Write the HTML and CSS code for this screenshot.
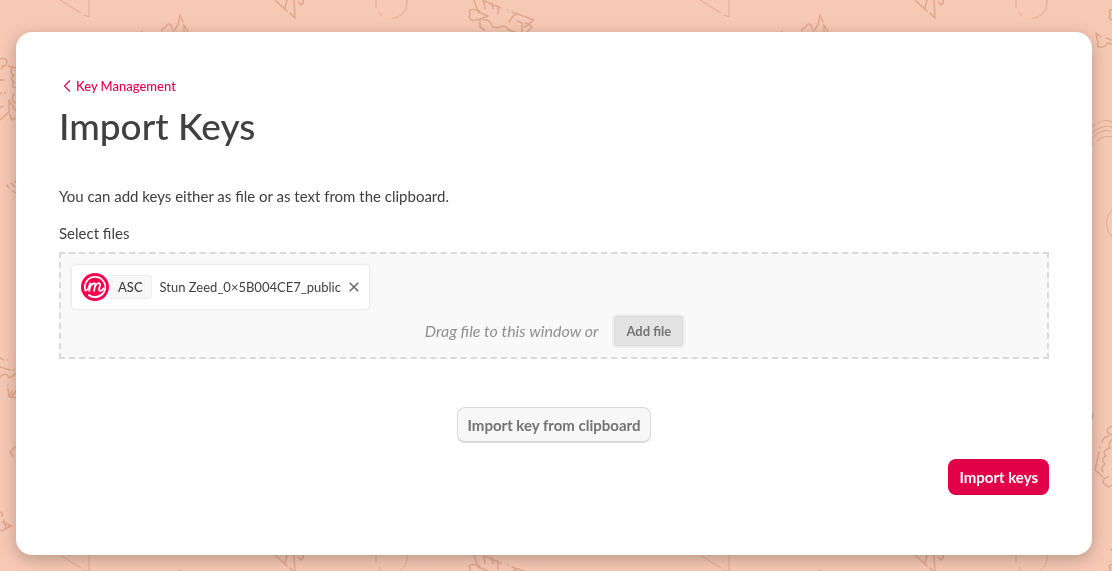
FILE: index.html
```html
<!DOCTYPE html>
<html lang="en">
<head>
<meta charset="utf-8">
<meta name="viewport" content="width=device-width, initial-scale=1">
<title>Import Keys</title>
<link rel="stylesheet" href="styles.css">
</head>
<body>
<svg class="backdrop" aria-hidden="true">
  <defs>
    <pattern id="doodles" width="640" height="555" patternUnits="userSpaceOnUse">
      <g class="doodle thin">
        <path d="M60 0L81 13M84 15L89 17V0"/>
        <path d="M376 0V7M379 12L382 16M392 18.500A16 16 0 0 0 407 0"/>
        <path d="M452 127Q454 124 456 124M458 123L460 122M462 121Q467 119 472 122M452 133Q462 124 472 127M452 138Q462 128 471 131M457 141Q464 134 472 137M452 144H454"/>
        <path d="M472 210Q460 223 472 237"/>
      </g>
      <g class="doodle">
        <path d="M142 31V32M162 32Q161 28 165 28Q168 22 171 25L172 29M173 32L178 25L180 15L183 22M184 32V25L188 32"/>
        <path d="M275 0L287 11M285 8L287 0M290 13L295 18L294 0M298 2L301 5Q304 3 303 0"/>
        <path d="M474 0L478 12L488 16L478 20M480 11Q472 8 469 11Q471 14 469 17Q472 23 477 19M482 0L501 8M484 1L485 9M492 3L493 9M498 6V14M507 10H508M512 12L534 20L528 24L532 27L527 32M509 22L514 15L519 14M517 21L522 23V32M480 21V27L485 30M483 20Q489 19 491 24T499 27T507 28T515 32M525 23L530 24L524 27"/>
        <path d="M456 33L461 37M466 38L471 40M456 34L458 42Q456 48 462 47Q467 46 467 43L472 44"/>
        <path d="M0 59Q6 57 7 61Q6 67 2 66V69M8 66L16 68M12 68Q9 73 14 75Q9 79 14 82Q10 87 16 88M0 80H4M0 94L2 93M5 92V93M0 108L3 106M0 120L9 112V100L15 110M14 94Q10 100 15 103M10 114Q11 123 15 118"/>
        <path d="M7 185L9 188M11 183L15 187M13 191L16 193M15 181L16 182"/>
        <path d="M0 358L4 360M7 360H8M0 367L10 370M13 370H14M0 377Q5 372 8 376Q9 380 16 373M8 385V386M8 389L9 396L16 398M12 391L9 397M16 391L11 397"/>
        <path d="M16 446L10 452L13 456"/>
        <path d="M0 512Q3 513 2 516M0 530L2 531M2 522L11 526L3 530M4 520L6 529"/>
        <path d="M453 414L452 419M472 426Q465 429 468 433L472 435M462 442Q463 437 469 436M460 447V448M459 452L455 470L463 477M472 439Q467 445 470 448Q461 451 466 456Q460 459 465 464Q460 468 463 472M468 477Q461 479 464 484L469 487L472 485M471 550L472 549"/>
      </g>
    </pattern>
  </defs>
  <rect width="100%" height="100%" fill="url(#doodles)"/>
</svg>
<main class="card">
  <nav>
    <a class="back" href="#">
      <svg width="8" height="12" viewBox="0 0 8 12" aria-hidden="true"><path d="M7 .5L1.500 6L7 11.500"/></svg>
      <span>Key Management</span>
    </a>
  </nav>
  <h1>Import Keys</h1>
  <p class="intro">You can add keys either as file or as text from the clipboard.</p>
  <h2 class="label" id="files-label">Select files</h2>
  <section class="dropzone" aria-labelledby="files-label">
    <div class="file">
      <svg class="logo" width="28" height="28" viewBox="0 0 28 28" aria-hidden="true">
        <circle class="logo-disc" cx="14" cy="14" r="14"/>
        <path d="M4.500 17.500A10.200 10.200 0 1 1 8 22.200"/>
        <path d="M4.500 17.500C7.500 17.500 8 13 9 10.500L9.800 11L8.200 18M9 14C11 10 14.800 9 14.200 12L13 18M13.800 13.500C16 9.500 20 9 19 12.500L18 16C17.500 18.500 21 18.500 22.500 15.500"/>
        <path d="M8 22.200C12 25 18 24.500 21 21"/>
      </svg>
      <span class="type">ASC</span>
      <span class="name">Stun Zeed_0×5B004CE7_public</span>
      <button class="remove" type="button" aria-label="Remove file">
        <svg width="10" height="10" viewBox="0 0 10 10" aria-hidden="true"><path d="M.7.700L9.300 9.300M9.300.700L.7 9.300"/></svg>
      </button>
    </div>
    <div class="add">
      <span class="hint">Drag file to this window or</span>
      <button class="add-button" type="button">Add file</button>
    </div>
  </section>
  <div class="clipboard"><button class="button" type="button">Import key from clipboard</button></div>
  <div class="actions"><button class="button primary" type="button">Import keys</button></div>
</main>
</body>
</html>
```
FILE: styles.css
```css
* { box-sizing: border-box; }

body {
  margin: 0;
  min-height: 100vh;
  padding: 32px 20px 16px 16px;
  background: #f6c9b4;
  color: #404040;
  font: 15px/20px Lato, "Liberation Sans", sans-serif;
}

h1, h2, p { margin: 0; }
button { font: inherit; margin: 0; cursor: pointer; }

.backdrop {
  position: fixed;
  inset: 0;
  width: 100%;
  height: 100%;
  z-index: -1;
}

.doodle {
  fill: none;
  stroke: #e1a78d;
  stroke-width: 1.500px;
  stroke-linecap: round;
  stroke-linejoin: round;
}
.thin { stroke-width: 1px; }

.card {
  padding: 44px 43px 60px;
  border-radius: 16px;
  background: #fff;
  box-shadow: 0 4px 16px rgba(0, 0, 0, .25);
}

.back {
  display: inline-flex;
  align-items: center;
  gap: 5px;
  padding-left: 4px;
  color: #e2004b;
  font-size: 13px;
  font-weight: 500;
  text-decoration: none;
}
.back path { fill: none; stroke: currentColor; stroke-width: 1.200px; }

h1 {
  margin-top: 6px;
  font-size: 37px;
  font-weight: 500;
  line-height: 48px;
}

.intro { margin-top: 36px; }
.label {
  margin: 17px 0 9px;
  font-size: 15px;
  font-weight: 400;
}

.dropzone {
  padding: 11px;
  border: 2px dashed #dadada;
  background: #f9f9f9;
}

.file {
  display: flex;
  align-items: center;
  width: fit-content;
  height: 44px;
  padding: 0 10px 0 9px;
  border-radius: 4px;
  background: #fff;
  box-shadow: 0 0 3px rgba(0, 0, 0, .15);
  font-size: 13px;
}
.logo {
  fill: none;
  stroke: #fff;
  stroke-linecap: round;
  stroke-linejoin: round;
}
.logo path { stroke-width: 1.700px; }
.logo-disc { fill: #ff004f; stroke: none; }
.type {
  margin-right: 8px;
  padding: 0 8px 0 9px;
  border: 1px solid #efefef;
  border-left: 0;
  border-radius: 0 4px 4px 0;
  background: #f7f7f7;
  font-weight: 500;
  line-height: 22px;
}
.remove {
  display: flex;
  margin-left: 8px;
  padding: 0;
  border: 0;
  background: none;
}
.remove path { fill: none; stroke: #666; stroke-width: 1.500px; }

.add {
  display: flex;
  align-items: center;
  justify-content: center;
  gap: 16px;
  margin-top: 7px;
}
.hint { color: #8f8f8f; font-size: 16px; font-style: italic; }
.add-button {
  height: 30px;
  padding: 0 11px;
  border: 1px solid #dadada;
  border-radius: 3px;
  background: #e3e3e3;
  box-shadow: 0 0 0 2px #eee;
  color: #737373;
  font-size: 13px;
  font-weight: 700;
}

.clipboard {
  display: flex;
  justify-content: center;
  margin-top: 48px;
}
.button {
  height: 36px;
  padding: 0 10px;
  border: 1px solid #dadada;
  border-bottom-width: 2px;
  border-radius: 8px;
  background: #f7f7f7;
  color: #737373;
  font-weight: 700;
}
.actions {
  display: flex;
  justify-content: flex-end;
  margin-top: 16px;
}
.primary {
  border-color: #e2004b #e2004b #cc0044;
  border-bottom-width: 1px;
  background: #e2004b;
  color: #fff;
}
```
